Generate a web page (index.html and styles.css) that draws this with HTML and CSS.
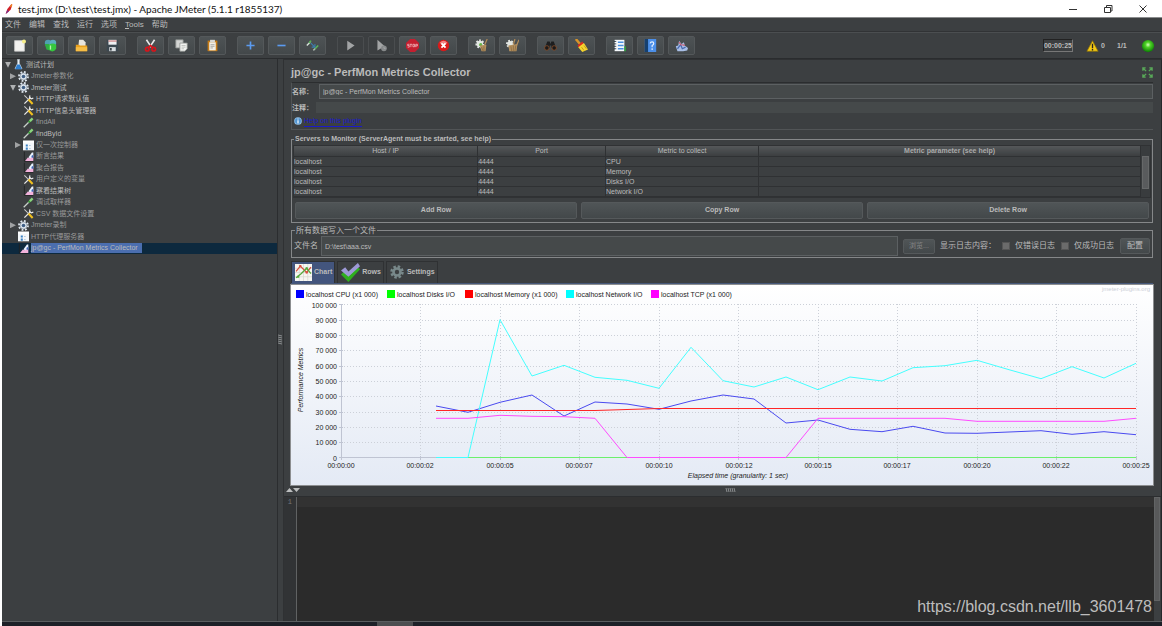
FILE: index.html
```html
<!DOCTYPE html>
<html lang="en">
<head>
<meta charset="utf-8">
<title>test.jmx - Apache JMeter</title>
<link rel="stylesheet" href="styles.css">
</head>
<body>
<svg class="defs" aria-hidden="true">
  <defs>
    <linearGradient id="sky" x1="0" y1="0" x2="0" y2="1"><stop offset="0" stop-color="#fff"/><stop offset="1" stop-color="#e4eaf5"/></linearGradient>
    <radialGradient id="greenBall" cx=".5" cy=".4" r=".6"><stop offset="0" stop-color="#d8ffc0"/><stop offset=".35" stop-color="#4fd326"/><stop offset="1" stop-color="#0b7a05"/></radialGradient>
    <symbol id="i-gear" viewBox="0 0 16 16"><circle cx="8" cy="8" r="6.4" fill="none" stroke="#dfe6ee" stroke-width="3" stroke-dasharray="2.6 2.4"/><circle cx="8" cy="8" r="5" fill="#dfe6ee" stroke="#9aa7b5"/><circle cx="8" cy="8" r="2.6" fill="#3f5f86"/></symbol>
    <symbol id="i-tools" viewBox="0 0 16 16"><path d="M2 14L11 5" stroke="#e8e8e8" stroke-width="1.8"/><path d="M10 2l-.5 3.5L12 7l3-1" fill="none" stroke="#e8e8e8" stroke-width="1.7"/><path d="M2 2l6 6" stroke="#cfcfcf" stroke-width="1.5"/><path d="M8 8l6 6.5" stroke="#f0c020" stroke-width="3"/></symbol>
    <symbol id="i-pipette" viewBox="0 0 16 16"><path d="M1 15L9 7" stroke="#c9d1cb" stroke-width="1.9"/><path d="M8 8l3-3" stroke="#3b963b" stroke-width="3"/><path d="M10 6l4-4" stroke="#8bd67e" stroke-width="3.4"/></symbol>
    <symbol id="i-list" viewBox="0 0 16 16"><path d="M0 1h16v14H0z" fill="#f4f7fa"/><path d="M0 1h16v3H0z" fill="#fff"/><path d="M4 6.5h3v3H4zM4 11h3v3H4z" fill="#3b82c4"/><path d="M9 8h2M9 12.500h2" stroke="#7fa6c9"/></symbol>
    <symbol id="i-graph" viewBox="0 0 16 16"><path d="M2 1v14h13" stroke="#222" fill="none" stroke-width="1.2"/><path d="M3 14.500l4-5 3 1 3-4h2v8z" fill="#f3b2dc"/><path d="M8 9l5-7h2v6l-5 3z" fill="#e9f2ff"/><path d="M13 6h2v4l-3-1z" fill="#3a66b5"/></symbol>
    <symbol id="i-flask" viewBox="0 0 16 16"><path d="M6 1h4M7 1v5L3 14h10L9 6V1" fill="#edf3f8" stroke="#dce8f2"/><path d="M6 8L3 15h10L10 8z" fill="#2f7fcf"/></symbol>
  </defs>
</svg>
<div class="window">
  <header class="titlebar">
    <svg class="feather" viewBox="0 0 12 14"><path d="M2 13L4 7 9 1l1 1-2 6-5 4z" fill="#d22128"/><path d="M2 13l2-5 2 2z" fill="#7a2a86"/><path d="M7 4l2-3 1 1-1 3z" fill="#f08a24"/></svg>
    <span class="caption">test.jmx (D:\test\test.jmx) - Apache JMeter (5.1.1 r1855137)</span>
    <button class="winbtn" aria-label="Minimize"><svg viewBox="0 0 10 10"><path d="M1 5.500h8" /></svg></button>
    <button class="winbtn" aria-label="Restore"><svg viewBox="0 0 10 10"><path d="M1.500 3.500h6v5h-6zM3.500 3V1.500h5.500v5.500H8" /></svg></button>
    <button class="winbtn" aria-label="Close"><svg viewBox="0 0 10 10"><path d="M1.500 1.500l7 7M8.500 1.500l-7 7" /></svg></button>
  </header>
  <nav class="menubar">
    <button>文件</button><button>编辑</button><button>查找</button><button>运行</button><button>选项</button><button><u>T</u>ools</button><button>帮助</button>
  </nav>
  <div class="toolbar">
    <div class="group">
      <button class="tool" aria-label="New"><svg viewBox="0 0 16 16"><path d="M2 2h12v13H2z" fill="#f3f3f1" stroke="#c9c9c9"/><circle cx="13.500" cy="3" r="2.500" fill="#f6ef8a"/></svg></button>
      <button class="tool" aria-label="Templates"><svg viewBox="0 0 16 16"><circle cx="5" cy="5" r="4" fill="#4f9fb0"/><circle cx="11" cy="5" r="4" fill="#5aaec0"/><path d="M1 6h5l1 8-4-1z" fill="#2fae43"/><path d="M6 7q5-3 9 0v5q-4 6-9 1z" fill="#36c73f"/><path d="M8 8v5" stroke="#b7f5ae" stroke-width="1.500"/></svg></button>
      <button class="tool" aria-label="Open"><svg viewBox="0 0 16 16"><path d="M5 1h5l3 3v6H4z" fill="#e7e4dc"/><path d="M1 7h4l1 1h9v7H1z" fill="#e9a01c"/><path d="M1 10h14v5H1z" fill="#f6bd45"/></svg></button>
      <button class="tool" aria-label="Save"><svg viewBox="0 0 16 16"><path d="M1 1h14v14H1z" fill="#3c4850"/><path d="M3 1h10v6H3z" fill="#eef1f3"/><path d="M3 2h10v1H3z" fill="#bf4848"/><path d="M4 10h8v5H4z" fill="#d8dde0"/><path d="M5 11h2v3H5z" fill="#30383e"/></svg></button>
    </div>
    <div class="group">
      <button class="tool" aria-label="Cut"><svg viewBox="0 0 16 16"><path d="M3 1l6 9M13 1L7 10" stroke="#e9e9e9" stroke-width="2"/><circle cx="4" cy="12.500" r="2.200" fill="none" stroke="#d8141b" stroke-width="2"/><circle cx="12" cy="12.500" r="2.200" fill="none" stroke="#d8141b" stroke-width="2"/><path d="M5 11l3-3 3 3" fill="none" stroke="#d8141b" stroke-width="2"/></svg></button>
      <button class="tool" aria-label="Copy"><svg viewBox="0 0 16 16"><path d="M1 1h9v10H1z" fill="#d4d6d4" stroke="#8f9390"/><path d="M6 5h9v7l-3 3H6z" fill="#f2f3f1" stroke="#8f9390"/><path d="M8 8h5M8 10h5M8 12h3" stroke="#b8bbb8"/></svg></button>
      <button class="tool" aria-label="Paste"><svg viewBox="0 0 16 16"><path d="M2 2h12v13H2z" fill="#c57b16"/><path d="M4 4h8v10H4z" fill="#f1efe8"/><path d="M5 1h6v3H5z" fill="#d8d8d4"/><path d="M5.500 7h5M5.500 9h5M5.500 11h3" stroke="#9a9a96"/></svg></button>
    </div>
    <div class="group">
      <button class="tool" aria-label="Expand all"><svg viewBox="0 0 16 16"><path d="M8 3v10M3 8h10" stroke="#5b9bf0" stroke-width="2"/></svg></button>
      <button class="tool" aria-label="Collapse all"><svg viewBox="0 0 16 16"><path d="M3 8h10" stroke="#5b9bf0" stroke-width="2"/></svg></button>
      <button class="tool" aria-label="Toggle"><svg viewBox="0 0 16 16"><path d="M1 8l4-4" stroke="#d8e4da" stroke-width="1.800"/><path d="M4 5l2-3" stroke="#59b65a" stroke-width="2"/><path d="M9 14l3-3" stroke="#aab5ac" stroke-width="1.800"/><path d="M11 12l4-4" stroke="#59b65a" stroke-width="2"/><path d="M6 5l4 4M7 10h4V6" fill="none" stroke="#3d7fae" stroke-width="1.300"/></svg></button>
    </div>
    <div class="group">
      <button class="tool off" aria-label="Start" disabled><svg viewBox="0 0 16 16"><path d="M4 2l9 6-9 6z" fill="#a2a4a5"/></svg></button>
      <button class="tool off" aria-label="Start no pauses" disabled><svg viewBox="0 0 16 16"><path d="M3 1l9 8-9 5z" fill="#a2a4a5"/><circle cx="11" cy="11.500" r="3.500" fill="#86898a"/><path d="M11 9.500v2h2" stroke="#a8aaab" fill="none"/></svg></button>
      <button class="tool" aria-label="Stop"><svg viewBox="0 0 16 16"><path d="M5 0h6l5 5v6l-5 5H5l-5-5V5z" fill="#c41f30"/><path d="M4 6.500H2v1.500h2v2H2M4.500 6.500h3M6 6.500V10M8.500 6.500h2v3h-2zM12 10V6.500h2v2h-2" stroke="#f0b8bc" fill="none"/></svg></button>
      <button class="tool" aria-label="Shutdown"><svg viewBox="0 0 16 16"><circle cx="8" cy="8" r="7" fill="#d91a1a"/><path d="M3 5q5-6 10 0-5 3-10 0" fill="#f08484"/><path d="M5.500 5.500l5 5M10.500 5.500l-5 5" stroke="#fff" stroke-width="2.200"/></svg></button>
    </div>
    <div class="group">
      <button class="tool" aria-label="Clear"><svg viewBox="0 0 16 16"><circle cx="6" cy="6" r="4" fill="#e2e6e2" stroke="#e2e6e2" stroke-width="3" stroke-dasharray="2 1.500"/><circle cx="7" cy="7" r="2" fill="#62b646"/><path d="M15 0l-3 7" stroke="#b28b58" stroke-width="1.500"/><path d="M6 8l8-1-1 8H8z" fill="#b3905f"/><path d="M8 10l2 5M11 9v6" stroke="#8a6a40"/></svg></button>
      <button class="tool" aria-label="Clear all"><svg viewBox="0 0 16 16"><circle cx="5" cy="6" r="3.500" fill="#e2e6e2" stroke="#e2e6e2" stroke-width="3" stroke-dasharray="2 1.500"/><path d="M11 0L9 7M16 1l-3 7" stroke="#b28b58" stroke-width="1.500"/><path d="M3 8l11-2-1 9H4z" fill="#b3905f"/><path d="M6 9l1 6M9 8v7M12 8l-1 7" stroke="#8a6a40"/></svg></button>
    </div>
    <div class="group">
      <button class="tool" aria-label="Search"><svg viewBox="0 0 16 16"><path d="M4 3h3l1 3 1-3h3l3 8H9V8H7v3H1z" fill="#1d1e1f"/><circle cx="3.500" cy="11" r="2.800" fill="#1a1a1a" stroke="#8a4d28"/><circle cx="12.500" cy="11" r="2.800" fill="#1a1a1a" stroke="#8a4d28"/></svg></button>
      <button class="tool" aria-label="Reset search"><svg viewBox="0 0 16 16"><path d="M1 0l6 7" stroke="#d7952a" stroke-width="3"/><path d="M3 8l6-5 2 3-6 5z" fill="#d92c1f"/><path d="M4 10l7-5 5 8-7 3z" fill="#f5d52f"/><path d="M8 10l3 4M11 8l3 4" stroke="#b9921a"/></svg></button>
    </div>
    <div class="group">
      <button class="tool" aria-label="Function helper"><svg viewBox="0 0 16 16"><path d="M2 1h12v14H2z" fill="#f5f8fb"/><path d="M1 3h3M1 6h3M1 9h3M1 12h3" stroke="#1f2a36"/><path d="M6 4h7M6 8h7M6 12h7" stroke="#4a8fe0" stroke-width="2"/><path d="M14 9h2v6h-2z" fill="#2c9c3c"/></svg></button>
      <button class="tool" aria-label="Help"><svg viewBox="0 0 16 16"><path d="M1 0h14v16H1z" fill="#4c8fe8"/><path d="M1 0h4v16H1z" fill="#16406f"/><path d="M7.500 5.500q.5-2 2.500-2t2 2q0 1.500-2 2.500v2M10 11.500v2" stroke="#e8f2ff" stroke-width="1.400" fill="none"/></svg></button>
      <button class="tool" aria-label="Plugins"><svg viewBox="0 0 16 16"><path d="M1 9l3-1 1-6 3 4 3-2 1 4 4 3-1 3-5 1H3z" fill="#a9bfe6"/><path d="M3 12l4-5 2 5 4-2" stroke="#4669b0" fill="none" stroke-width="1.500"/><path d="M5 4l3 4M9 7l3 1" stroke="#d35a6a" stroke-width="1.500"/></svg></button>
    </div>
    <div class="status">
      <output class="timer">00:00:25</output>
      <svg class="warn" viewBox="0 0 16 16"><path d="M8 1l7.500 14H.5z" fill="#f4c914" stroke="#8d7208"/><path d="M8 5v6M8 12v2" stroke="#222" stroke-width="1.800"/></svg>
      <span class="errors">0</span>
      <span class="threads">1/1</span>
      <svg class="ball" viewBox="0 0 16 16"><circle cx="8" cy="8" r="7" fill="url(#greenBall)"/></svg>
    </div>
  </div>
  <div class="main">
    <aside class="side">
      <ul class="tree">
        <li class="l0 bright"><i class="open"></i><svg><use href="#i-flask"/></svg><span>测试计划</span></li>
        <li class="l1"><i class="shut"></i><svg><use href="#i-gear"/></svg><span>Jmeter参数化</span></li>
        <li class="l1 bright"><i class="open"></i><svg><use href="#i-gear"/></svg><span>Jmeter测试</span></li>
        <li class="l2 bright"><i></i><svg><use href="#i-tools"/></svg><span>HTTP请求默认值</span></li>
        <li class="l2 bright"><i></i><svg><use href="#i-tools"/></svg><span>HTTP信息头管理器</span></li>
        <li class="l2"><i></i><svg><use href="#i-pipette"/></svg><span>findAll</span></li>
        <li class="l2 bright"><i></i><svg><use href="#i-pipette"/></svg><span>findById</span></li>
        <li class="l2"><i class="shut"></i><svg><use href="#i-list"/></svg><span>仅一次控制器</span></li>
        <li class="l2"><i></i><svg><use href="#i-graph"/></svg><span>断言结果</span></li>
        <li class="l2"><i></i><svg><use href="#i-graph"/></svg><span>聚合报告</span></li>
        <li class="l2"><i></i><svg><use href="#i-tools"/></svg><span>用户定义的变量</span></li>
        <li class="l2 bright"><i></i><svg><use href="#i-graph"/></svg><span>察看结果树</span></li>
        <li class="l2"><i></i><svg><use href="#i-pipette"/></svg><span>调试取样器</span></li>
        <li class="l2"><i></i><svg><use href="#i-tools"/></svg><span>CSV 数据文件设置</span></li>
        <li class="l1"><i class="shut"></i><svg><use href="#i-gear"/></svg><span>Jmeter录制</span></li>
        <li class="l1"><i></i><svg><use href="#i-list"/></svg><span>HTTP代理服务器</span></li>
        <li class="l1 selected"><i></i><svg><use href="#i-graph"/></svg><span>jp@gc - PerfMon Metrics Collector</span></li>
      </ul>
    </aside>
    <div class="vsplit"><svg viewBox="0 0 4 12"><path d="M0 1l4 1M0 3l4 1M0 5l4 1M0 7l4 1M0 9l4 1" stroke="#a0a3a5" stroke-width=".8"/></svg></div>
    <section class="content">
      <div class="panel">
        <div class="heading">
          <h1>jp@gc - PerfMon Metrics Collector</h1>
          <svg class="expand" viewBox="0 0 12 12"><path d="M1 4V1h3M8 1h3v3M11 8v3H8M4 11H1V8M1 1l3.500 3.500M11 1L7.500 4.500M11 11L7.500 7.500M1 11l3.500-3.500" fill="none" stroke="#58a858" stroke-width="1.500"/></svg>
        </div>
        <div class="naming">
          <div class="row name"><label for="name">名称：</label><input id="name" value="jp@gc - PerfMon Metrics Collector"></div>
          <div class="row note"><label for="note">注释：</label><input id="note"></div>
          <div class="help"><svg viewBox="0 0 10 10"><circle cx="5" cy="5" r="4.800" fill="#8fbfe6"/><circle cx="5" cy="5" r="3.600" fill="#4f93d0"/><path d="M5 2v1.200M5 4.200v4" stroke="#fff" stroke-width="1.500"/></svg><a href="#help">Help on this plugin</a></div>
        </div>
        <fieldset class="servers">
          <legend>Servers to Monitor (ServerAgent must be started, see help)</legend>
          <div class="grid">
            <table>
              <thead><tr><th class="c1">Host / IP</th><th class="c2">Port</th><th class="c3">Metric to collect</th><th>Metric parameter (see help)</th></tr></thead>
              <tbody>
                <tr><td>localhost</td><td>4444</td><td>CPU</td><td></td></tr>
                <tr><td>localhost</td><td>4444</td><td>Memory</td><td></td></tr>
                <tr><td>localhost</td><td>4444</td><td>Disks I/O</td><td></td></tr>
                <tr><td>localhost</td><td>4444</td><td>Network I/O</td><td></td></tr>
              </tbody>
            </table>
            <div class="track"><div class="thumb"></div></div>
          </div>
          <div class="actions"><button>Add Row</button><button>Copy Row</button><button>Delete Row</button></div>
        </fieldset>
        <fieldset class="output">
          <legend>所有数据写入一个文件</legend>
          <div class="filerow">
            <label for="file">文件名</label><input id="file" class="file" value="D:\test\aaa.csv">
            <button class="browse">浏览...</button>
            <span class="logs">显示日志内容：</span>
            <label class="check"><input type="checkbox">仅错误日志</label>
            <label class="check"><input type="checkbox">仅成功日志</label>
            <button class="config">配置</button>
          </div>
        </fieldset>
        <div class="tabs">
          <button class="tab active"><svg viewBox="0 0 16 16"><path d="M0 0h16v16H0z" fill="#f7f7f2"/><path d="M0 4h16M0 8h16M0 12h16M4 0v16M8 0v16M12 0v16" stroke="#d4d4cc" stroke-width=".6"/><path d="M1 7l4-5 6 6 4-5" fill="none" stroke="#d8503f" stroke-width="1.200"/><path d="M1 13l5-4 5-5 4 5" fill="none" stroke="#55a83c" stroke-width="1.200"/><path d="M4 1h2v2H4zM10 7h2v2h-2z" fill="#d8503f"/><path d="M2 11h2v2H2zM10 3h2v2h-2z" fill="#55a83c"/></svg>Chart</button>
          <button class="tab rows"><svg viewBox="0 0 18 18"><path d="M0 11l3-3 3 4 10-8 2 2L7 18z" fill="#2fae1e"/><path d="M0 7l4-3 3 4 9-8 2 3-11 10z" fill="#9d99d6"/></svg>Rows</button>
          <button class="tab settings"><svg viewBox="0 0 16 16"><circle cx="8" cy="8" r="6.200" fill="none" stroke="#78888a" stroke-width="3" stroke-dasharray="2.800 2.070"/><circle cx="8" cy="8" r="4" fill="none" stroke="#78888a" stroke-width="3"/></svg>Settings</button>
        </div>
        <svg class="chart" viewBox="291 285 862 200" role="img" aria-label="Performance Metrics">
          <path d="M291 285h862v200H291z" fill="url(#sky)"/>
          <g class="legend">
            <path d="M296 290h8v8h-8z" fill="#00f"/><text x="306" y="297">localhost CPU (x1 000)</text>
            <path d="M387 290h8v8h-8z" fill="#0f0"/><text x="397" y="297">localhost Disks I/O</text>
            <path d="M465 290h8v8h-8z" fill="#f00"/><text x="475" y="297">localhost Memory (x1 000)</text>
            <path d="M566 290h8v8h-8z" fill="#0ff"/><text x="576" y="297">localhost Network I/O</text>
            <path d="M651 290h8v8h-8z" fill="#f0f"/><text x="661" y="297">localhost TCP (x1 000)</text>
          </g>
          <text class="credit" x="1150" y="291">jmeter-plugins.org</text>
          <path class="gridlines" d="M341 304.500H1136M341 320.500H1136M341 335.500H1136M341 350.500H1136M341 366.500H1136M341 381.500H1136M341 396.500H1136M341 412.500H1136M341 427.500H1136M341 442.500H1136M420.500 304V457M500.500 304V457M579.500 304V457M659.500 304V457M738.500 304V457M818.500 304V457M897.500 304V457M977.500 304V457M1056.500 304V457M1136.500 304V457"/>
          <path class="axis" d="M341.500 304V460M339 457.500H1136M339 304.500h4M339 320.500h4M339 335.500h4M339 350.500h4M339 366.500h4M339 381.500h4M339 396.500h4M339 412.500h4M339 427.500h4M339 442.500h4M420.500 456v4M500.500 456v4M579.500 456v4M659.500 456v4M738.500 456v4M818.500 456v4M897.500 456v4M977.500 456v4M1056.500 456v4M1136.500 456v4"/>
          <g class="ylabels">
            <text x="337" y="308">100 000</text><text x="337" y="323">90 000</text><text x="337" y="338">80 000</text><text x="337" y="353">70 000</text><text x="337" y="369">60 000</text><text x="337" y="384">50 000</text><text x="337" y="399">40 000</text><text x="337" y="415">30 000</text><text x="337" y="430">20 000</text><text x="337" y="445">10 000</text><text x="337" y="461">0</text>
          </g>
          <g class="xlabels">
            <text x="341" y="468">00:00:00</text><text x="420" y="468">00:00:02</text><text x="500" y="468">00:00:05</text><text x="579" y="468">00:00:07</text><text x="659" y="468">00:00:10</text><text x="739" y="468">00:00:12</text><text x="818" y="468">00:00:15</text><text x="897" y="468">00:00:17</text><text x="977" y="468">00:00:20</text><text x="1056" y="468">00:00:22</text><text x="1136" y="468">00:00:25</text>
            <text class="axisname" x="738" y="478">Elapsed time (granularity: 1 sec)</text>
            <text class="axisname" transform="translate(303 380) rotate(-90)">Performance Metrics</text>
          </g>
          <g class="series">
            <polyline stroke="#4a4af0" points="436,406 468,412.300 500,402.300 532,395 564,416 595,402 627,404 659,409.300 691,401 723,395 754,399 786,423 818,420 850,429.300 882,431.700 913,426.300 945,433 977,433.300 1009,432 1041,430.700 1072,434.300 1104,431.700 1136,434.700"/>
            <polyline stroke="#6cf06c" points="436,457.500 1136,457.500"/>
            <polyline stroke="#4ff" points="436,457.500 468,457.500 500,319.700 532,376 564,365.300 595,377.300 627,380.300 659,388.300 691,347.300 723,380.700 754,387 786,377 818,389.700 850,377 882,381 913,367.700 945,365.700 977,360.300 1009,369.700 1041,378.700 1072,366.700 1104,378 1136,363.300"/>
            <polyline stroke="#ff4cff" points="436,418.300 468,418.300 500,415.300 532,416.300 564,416.700 595,418.300 627,457.500 786,457.500 818,418.300 945,418.300 977,421.300 1104,421.300 1136,418.300"/>
            <polyline stroke="#ff2626" points="436,410.500 595,410.500 659,408.500 1136,408.500"/>
          </g>
        </svg>
      </div>
      <div class="hsplit"><svg class="arrows" viewBox="0 0 14 6"><path d="M0 5l3.500-4L7 5zM7 1h7l-3.500 4z" fill="#bcbebf"/></svg><svg class="grip" viewBox="0 0 12 4"><path d="M1 0l1 4M3 0l1 4M5 0l1 4M7 0l1 4M9 0l1 4" stroke="#a0a3a5" stroke-width=".8"/></svg></div>
      <div class="log">
        <div class="gutter">1</div>
        <div class="code"><div class="line"></div><span class="mark">https://blog.csdn.net/llb_3601478</span></div>
        <div class="logtrack"><div class="logthumb"></div></div>
      </div>
    </section>
  </div>
  <footer class="taskbar"><div class="task"></div></footer>
</div>
</body>
</html>
```
FILE: styles.css
```css
* { box-sizing: border-box; }
body {
  margin: 0;
  background: #fff;
  color: #bbb;
  font: 7px/10px "Liberation Sans", "Noto Sans CJK SC", sans-serif;
}
button, input { font: inherit; color: inherit; margin: 0; min-width: 0; }
button { padding: 0; border: 0; background: none; }
svg { display: block; flex: none; }
.defs { position: absolute; width: 0; height: 0; }

.window { display: flex; flex-direction: column; height: 100vh; padding-left: 2px; }

.titlebar { display: flex; align-items: center; height: 17px; padding-right: 2px; color: #111; }
.feather { width: 10px; height: 12px; margin: 0 4px 0 2px; }
.caption { flex: 1; font: 10px/16px Lato, "Open Sans", sans-serif; }
.winbtn { display: flex; justify-content: center; width: 35px; }
.winbtn svg { width: 10px; height: 10px; fill: none; stroke: #333; stroke-width: 1; }

.menubar {
  display: flex;
  gap: 8px;
  height: 15px;
  padding-left: 3px;
  background: #3c3f41;
  border-top: 1px solid #8a8c8d;
  border-bottom: 1px solid #313335;
  font-size: 8px;
}

.toolbar {
  display: flex;
  align-items: center;
  gap: 11px;
  height: 27px;
  padding: 0 7px 0 4px;
  background: #3c3f41;
  border-top: 1px solid #4b4e50;
  border-bottom: 1px solid #2a2c2e;
}
.group { display: flex; gap: 4px; }
.tool {
  display: flex;
  align-items: center;
  justify-content: center;
  width: 27px;
  height: 19px;
  background: linear-gradient(#4e5355, #43484a);
  border: 1px solid #54585a;
  border-radius: 2px;
}
.tool.off { background: #3c3f41; border-color: #4a4d4f; }
.tool svg { width: 13px; height: 13px; fill: none; }
.status { display: flex; align-items: center; margin-left: auto; font-weight: bold; }
.timer { border: 1px solid #777; border-top-color: #222; border-left-color: #222; line-height: 11px; margin-right: 13px; }
.warn { width: 13px; height: 12px; margin-right: 2px; }
.errors { width: 16px; }
.threads { width: 24px; }
.ball { width: 14px; height: 14px; }

.main { display: flex; flex: 1; min-height: 0; background: #3c3f41; }
.side { width: 275px; }
.tree { display: grid; grid-auto-rows: 1fr; height: 195px; margin: 0; padding: 0; list-style: none; }
.tree li { display: flex; align-items: center; gap: 2px; color: #999; white-space: nowrap; min-height: 0; }
.tree .bright { color: #bbb; }
.tree svg { width: 11px; height: 11px; }
.tree span { line-height: 10px; }
.l0 { padding-left: 3px; }
.l1 { padding-left: 8px; }
.l2 { padding-left: 13px; }
.tree i { flex: none; width: 6px; height: 6px; }
.tree .open { background: #b0b2b3; clip-path: polygon(0 0, 100% 0, 50% 100%); }
.tree .shut { background: #a0a2a3; clip-path: polygon(0 0, 100% 50%, 0 100%); }
.tree .selected { background: #0d293e; color: #bbb; }
.selected span { background: #4b6eaf; padding-right: 4px; }

.vsplit { display: flex; align-items: center; width: 7px; border-left: 1px solid #2b2d2f; border-right: 1px solid #2f3133; }
.vsplit svg { width: 4px; height: 12px; }

.content { display: flex; flex: 1; flex-direction: column; min-width: 0; border-top: 1px solid #2f3133; border-right: 1px solid #25282a; }
.panel { padding: 0 8px 0 7px; }
.heading { display: flex; align-items: center; justify-content: space-between; height: 22px; padding-top: 2px; }
h1 { margin: 0; font-size: 11px; line-height: 12px; }
.expand { width: 11px; height: 11px; }

.naming { border: 1px solid #515456; border-top-color: #2b2d2f; border-right: 0; padding-bottom: 2px; margin-bottom: 4px; }
.row { display: flex; align-items: center; }
.row label { font-weight: bold; }
.row input { flex: 1; background: #45494a; border: 0; padding: 0 4px; }
.name label { width: 27px; }
.name { margin-top: 1px; }
.name input { height: 15px; border: 1px solid #5c6062; padding: 0 3px; }
.note { margin: 3px 0 2px; }
.note label { width: 24px; }
.note input { height: 11px; }
.help { display: flex; align-items: center; gap: 2px; padding-left: 2px; height: 12px; }
.help svg { width: 8px; height: 8px; }
.help a { color: #1a1acb; line-height: 10px; text-decoration: none; border-bottom: 1px solid #1a1acb; }

fieldset { margin: 0 0 3px; padding: 0 2px; border: 1px solid #858789; min-width: 0; }
legend { padding: 0 1px; margin-left: 1px; line-height: 10px; font-weight: bold; }
.servers { padding: 1px 1px 3px; }
.grid { display: flex; border: 1px solid #303234; }
table { flex: 1; border-collapse: collapse; table-layout: fixed; }
th, td { height: 10px; padding: 0 1px; line-height: 9px; border-right: 1px solid #2f3133; border-bottom: 1px solid #2f3133; }
td { padding-left: 0; }
th { background: linear-gradient(#55585a, #3c3f41); font-weight: normal; }
th:last-child { font-weight: bold; color: #aaa; }
.c1 { width: 21.7%; }
.c2 { width: 15.1%; }
.c3 { width: 18.1%; }
.track { width: 9px; padding: 10px 1px 8px; background: #393c3e; }
.thumb { height: 100%; background: #595b5d; border: 1px solid #666869; }
.actions { display: grid; grid-template-columns: repeat(3, 1fr); gap: 4px; padding: 4px 2px 0; font-weight: bold; }
.actions button, .browse, .config { background: linear-gradient(#505557, #43484a); border: 1px solid #55595b; border-radius: 2px; }
.actions button { height: 17px; }

.output legend { font-weight: normal; font-size: 8px; line-height: 10px; }
.filerow { display: flex; align-items: center; height: 21px; font-size: 8px; }
.file { flex: 1; height: 20px; margin: 0 5px 0 3px; padding: 0 3px; background: #45494a; border: 1px solid #5c6062; font-size: 7px; }
.browse { width: 32px; height: 15px; margin-right: 5px; color: #888; font-size: 7px; }
.logs { width: 62px; }
.check { display: flex; align-items: center; gap: 5px; width: 59px; }
.check input { appearance: none; width: 8px; height: 8px; background: #6b6b6b; border: 1px solid #555; }
.config { width: 30px; height: 16px; }

.tabs { display: flex; gap: 2px; border-bottom: 2px solid #46587a; }
.tab { display: flex; align-items: center; gap: 2px; height: 22px; padding: 0 2px 0 3px; border: 1px solid #2f3133; border-bottom: 0; font-weight: bold; }
.tab svg { width: 17px; height: 17px; }
.rows svg { width: 19px; height: 19px; }
.settings svg { width: 14px; height: 14px; }
.settings { gap: 3px; }
.active { background: #43557d; }

.chart { width: 100%; height: auto; outline: 1px solid #8c8e90; font-size: 7px; fill: #222; }
.credit { text-anchor: end; font-size: 6px; fill: #ccd0d8; }
.gridlines { fill: none; stroke: #ccd0d8; stroke-dasharray: 1 2; }
.axis { fill: none; stroke: #bfc4d2; }
.ylabels { text-anchor: end; }
.xlabels { text-anchor: middle; }
.axisname { font-style: italic; }
.series { fill: none; stroke-width: 1; }

.hsplit { display: flex; align-items: center; height: 12px; padding-left: 2px; border-bottom: 1px solid #2b2d2f; }
.arrows { width: 14px; height: 6px; }
.grip { width: 12px; height: 4px; margin: 0 auto; }
.log { display: flex; flex: 1; min-height: 0; background: #2b2b2b; }
.gutter { width: 13px; padding-right: 4px; background: #313335; border-right: 1px solid #606263; text-align: right; color: #777; font-family: "Liberation Mono", monospace; }
.code { display: flex; flex: 1; flex-direction: column; justify-content: space-between; }
.line { height: 10px; background: #323232; }
.mark { align-self: flex-end; padding: 0 2px 4px 0; font-size: 16px; line-height: 20px; color: #bdbdbd; }
.logtrack { width: 7px; background: #3c3f41; }
.logthumb { width: 6px; height: 84%; background: #58595a; border: 1px solid #626465; }

.taskbar { height: 5px; padding-left: 375px; background: #1d2027; border-top: 1px solid #5a5d5f; }
.task { width: 36px; height: 4px; background: #4c4e50; }
```
